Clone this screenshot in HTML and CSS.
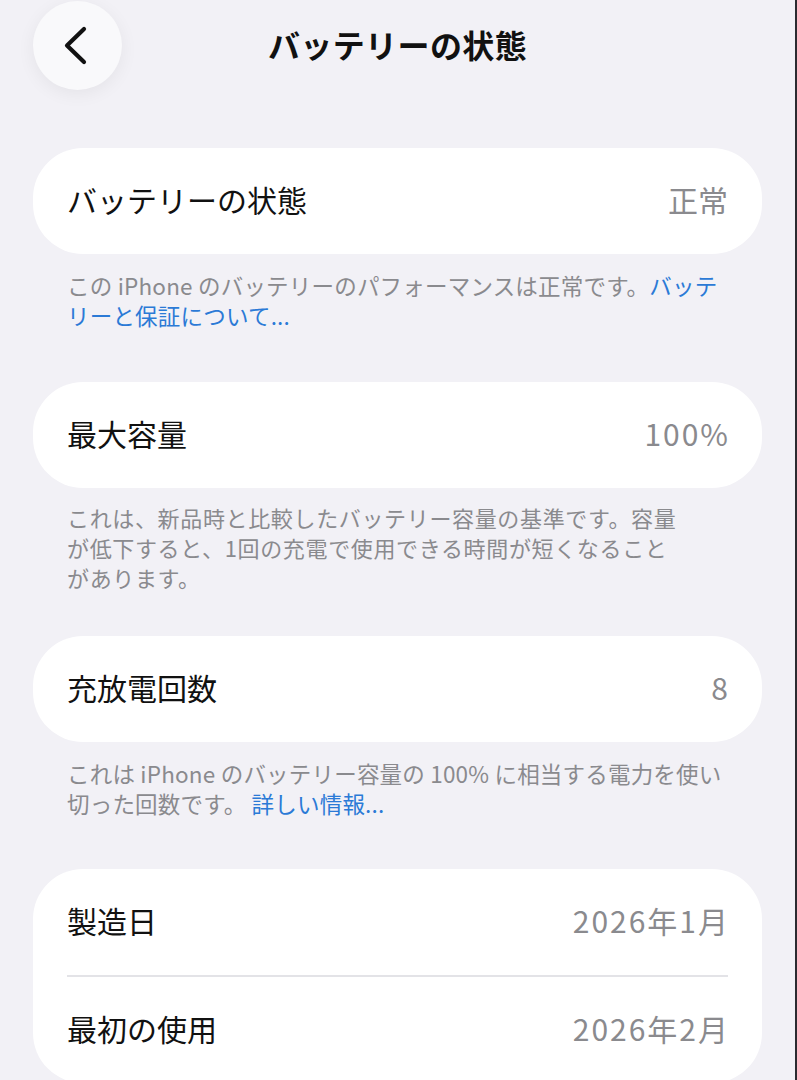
FILE: index.html
```html
<!DOCTYPE html>
<html lang="ja">
<head>
    <meta charset="UTF-8">
    <meta name="viewport" content="width=device-width, initial-scale=1.0">
    <title>バッテリーの状態</title>
    <link rel="stylesheet" href="styles.css">
</head>
<body>
    <div class="page">
        <!-- Header -->
        <header class="header">
            <button class="back" aria-label="戻る">
                <svg width="28" height="40" viewBox="0 0 28 40">
                    <path d="M22 3 L5 19.5 L22 36" fill="none" stroke="#111" stroke-width="4.2" stroke-linecap="round" stroke-linejoin="round"/>
                </svg>
            </button>
            <h1 class="title">バッテリーの状態</h1>
        </header>

        <!-- Battery health -->
        <section class="group">
            <div class="card">
                <div class="row">
                    <span class="label">バッテリーの状態</span>
                    <span class="value">正常</span>
                </div>
            </div>
            <p class="note">この iPhone のバッテリーのパフォーマンスは正常です。<a href="#">バッテ<br>リーと保証について...</a></p>
        </section>

        <!-- Maximum capacity -->
        <section class="group group-cap">
            <div class="card">
                <div class="row">
                    <span class="label">最大容量</span>
                    <span class="value num">100%</span>
                </div>
            </div>
            <p class="note note-tight">これは、新品時と比較したバッテリー容量の基準です。容量<br>が低下すると、1回の充電で使用できる時間が短くなること<br>があります。</p>
        </section>

        <!-- Cycle count -->
        <section class="group group-cycle">
            <div class="card">
                <div class="row">
                    <span class="label">充放電回数</span>
                    <span class="value num">8</span>
                </div>
            </div>
            <p class="note">これは iPhone のバッテリー容量の 100% に相当する電力を使い<br>切った回数です。 <a href="#">詳しい情報...</a></p>
        </section>

        <!-- Dates -->
        <section class="group group-dates">
            <div class="card">
                <div class="row">
                    <span class="label">製造日</span>
                    <span class="value num">2026年1月</span>
                </div>
                <div class="divider"></div>
                <div class="row">
                    <span class="label">最初の使用</span>
                    <span class="value num">2026年2月</span>
                </div>
            </div>
        </section>
    </div>
</body>
</html>
```

FILE: styles.css
```css
* {
    box-sizing: border-box;
    margin: 0;
    padding: 0;
}

html, body {
    height: 100%;
}

body {
    background: #f2f1f6;
    font-family: "Noto Sans CJK JP", "Noto Sans", sans-serif;
    color: #111;
    overflow: hidden;
}

.page {
    min-height: 100%;
    padding: 1px 33px 0 33px;
    border-right: 2px solid #2b2b30;
}

.header {
    position: relative;
    height: 89px;
    display: flex;
    align-items: center;
    justify-content: center;
    padding-bottom: 3px;
}

.back {
    position: absolute;
    left: 0;
    top: 0;
    width: 89px;
    height: 89px;
    border: none;
    border-radius: 50%;
    background: #f9f9fb;
    box-shadow: 0 4px 18px rgba(0, 0, 0, 0.06);
    display: flex;
    align-items: center;
    justify-content: center;
    padding-right: 4px;
    cursor: pointer;
}

.title {
    font-size: 32px;
    font-weight: 700;
    letter-spacing: 0.4px;
}

.group {
    margin-top: 58px;
}

.group-cap {
    margin-top: 52px;
}

.group-cycle {
    margin-top: 44px;
}

.group-dates {
    margin-top: 51px;
}

.card {
    background: #fff;
    border-radius: 50px;
    padding: 0 34px;
}

.row {
    height: 106px;
    display: flex;
    align-items: center;
    justify-content: space-between;
    font-size: 30px;
    padding-bottom: 5px;
}

.value {
    color: #8a8a8e;
}

.value.num {
    letter-spacing: 2px;
    margin-right: -2px;
}

.divider {
    height: 2px;
    background: #e3e3e7;
}

.note {
    padding: 16px 34px 0 34px;
    font-size: 22.5px;
    line-height: 30px;
    color: #8a8a8e;
    letter-spacing: 0.2px;
}

.note-tight {
    padding-top: 14px;
    font-size: 22px;
    letter-spacing: 0.65px;
}

.note a {
    color: #2b7ad6;
    text-decoration: none;
}
```
